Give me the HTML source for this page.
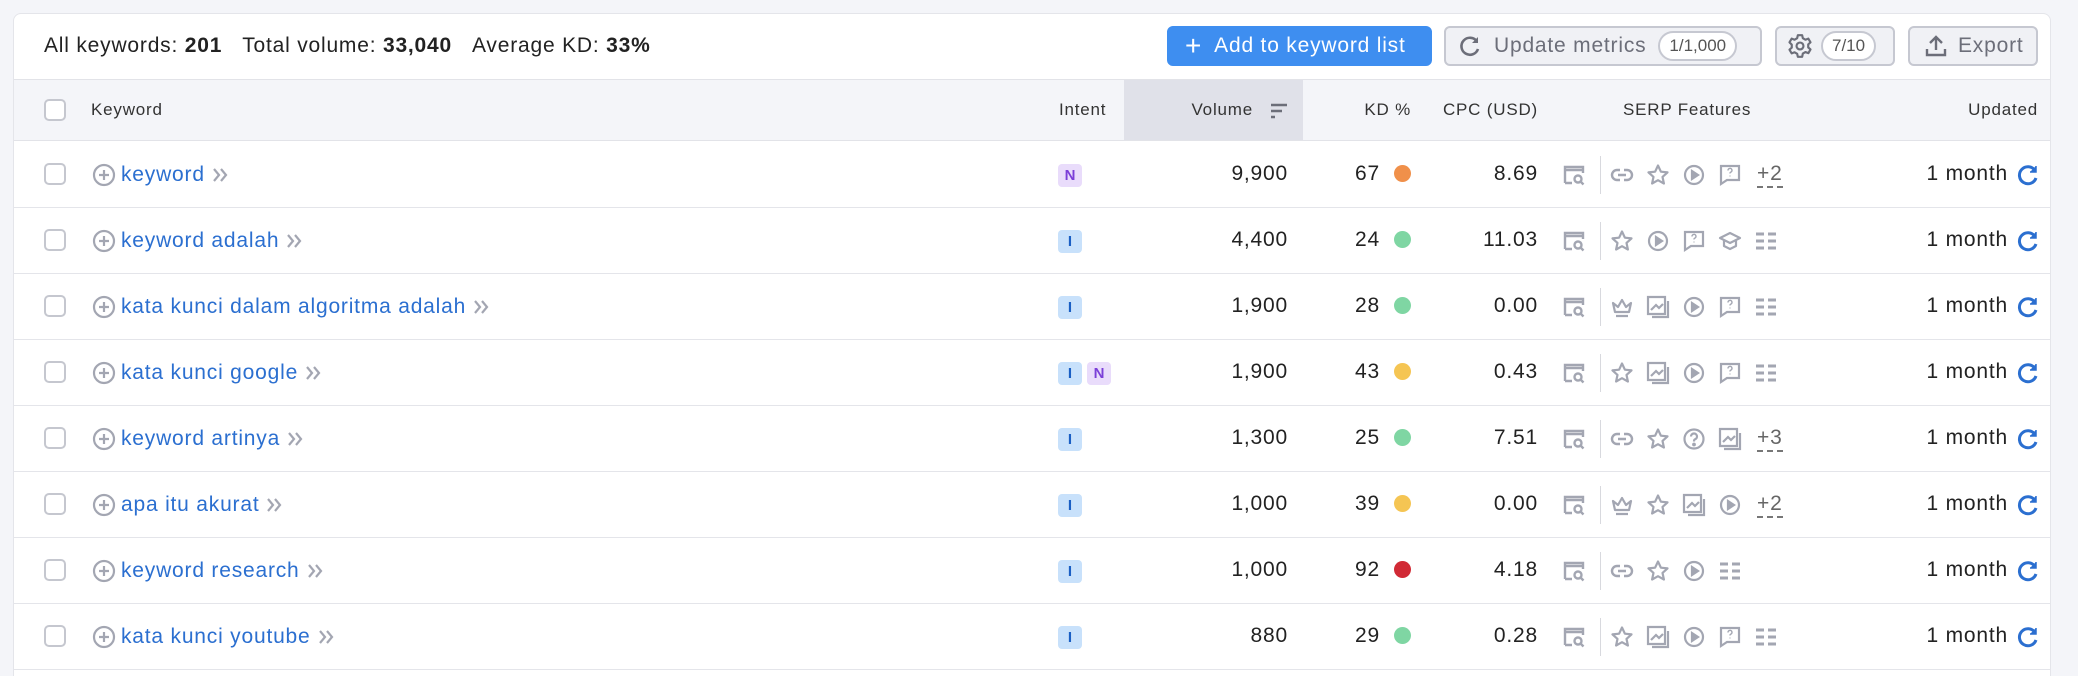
<!DOCTYPE html>
<html style="height:676px;overflow:hidden"><head><meta charset="utf-8"><style>
*{box-sizing:border-box;margin:0;padding:0}
body{width:2078px;height:676px;background:#f4f5f9;font-family:"Liberation Sans",sans-serif;color:#333;overflow:hidden;position:relative;letter-spacing:0.05em}
.card{position:absolute;left:13px;top:13px;width:2038px;height:690px;background:#fff;border:1px solid #e4e5ea;border-radius:8px;overflow:hidden}
.abs{position:absolute}
.top{position:absolute;left:30px;top:18px;font-size:21px;line-height:28px;color:#222;white-space:nowrap}
.top b{font-weight:bold;margin-right:20px}
.btn{position:absolute;top:12px;height:40px;border-radius:6px;border:2px solid #c6c8d1;background:#f0f1f5;color:#6c6e79;font-size:21px;display:flex;align-items:center;white-space:nowrap}
.pill{border:2px solid #c6c8d1;background:#fff;border-radius:16px;font-size:17px;height:30px;padding:0 9px;display:flex;align-items:center;color:#555;letter-spacing:0}
.thead{position:absolute;left:0;top:65px;width:100%;height:62px;background:#f4f5f9;border-top:1px solid #e2e3e8;border-bottom:1px solid #e2e3e8;font-size:17px;color:#333}
.thead span{position:absolute;top:20px;white-space:nowrap}
.cb{position:absolute;width:22px;height:22px;border:2px solid #c5c7cf;border-radius:5px;background:#fff}
.row{position:absolute;left:0;width:100%;height:66px;border-bottom:1px solid #e4e5ea;font-size:21px;color:#222}
.row>*{position:absolute}
.kw{left:107px;top:21px;color:#2b6fd0;white-space:nowrap;display:flex;align-items:center}
.kw svg{margin-left:6px}
.badge{top:22px;width:24px;height:23px;border-radius:4px;font-size:15px;font-weight:bold;text-align:center;line-height:23px;letter-spacing:0}
.bI{background:#c8e1fb;color:#1a5fc4}
.bN{background:#e9dcfb;color:#7b3fd8}
.vol{right:762px;top:20px}
.kd{right:670px;top:20px}
.dot{left:1380px;top:23px;width:17px;height:17px;border-radius:50%}
.cpc{right:512px;top:20px}
.ic{top:21px;width:24px;height:24px}
.div{left:1586px;top:14px;width:1px;height:38px;background:#d8d9de}
.more{top:20px;font-size:21px;color:#666;border-bottom:2px dashed #777;line-height:24px}
.upd{right:42px;top:20px}
.rf{left:2002px;top:21px;width:24px;height:24px}
</style></head><body>
<svg width="0" height="0" style="position:absolute">
<defs>
<g id="serp" fill="none" stroke="#a3a6b2" stroke-width="2.4"><path d="M3 20V4h18v6M3 7h18M3 20h7"/><circle cx="16" cy="16" r="3.5"/><path d="M18.5 18.5l3 3"/></g>
<g id="link" fill="none" stroke="#a3a6b2" stroke-width="2.4"><path d="M10 7H7a5 5 0 0 0 0 10h3M14 7h3a5 5 0 0 1 0 10h-3M8 12h8"/></g>
<g id="star" fill="none" stroke="#a3a6b2" stroke-width="2.2" stroke-linejoin="round"><path d="M12 2.5l2.9 6.2 6.6.7-5 4.5 1.4 6.6L12 17.2l-5.9 3.3 1.4-6.6-5-4.5 6.6-.7z"/></g>
<g id="play" fill="none" stroke="#a3a6b2" stroke-width="2.2"><circle cx="12" cy="12" r="9"/><path d="M10 8v8l6-4z" fill="#a3a6b2"/></g>
<g id="faq" fill="none" stroke="#a3a6b2" stroke-width="2.2"><path d="M3 3h18v14H9l-6 4z"/><path d="M10 7.5a2 2 0 1 1 2.5 1.8c-.5.2-.5.6-.5 1.2" stroke-width="1.4"/><circle cx="12" cy="13" r=".6" fill="#a3a6b2" stroke="none"/></g>
<g id="crown" fill="none" stroke="#a3a6b2" stroke-width="2.2" stroke-linejoin="round"><path d="M3 8l5 4 4-7 4 7 5-4-2 9H5zM6 21h12"/></g>
<g id="image" fill="none" stroke="#a3a6b2" stroke-width="2.2"><path d="M2 2h17v17H2zM5 15l5-5 3 3 4-4M22 6v16H6"/></g>
<g id="cap" fill="none" stroke="#a3a6b2" stroke-width="2.2" stroke-linejoin="round"><path d="M2 9l10-5 10 5-10 5zM6 11v6l6 3 6-3v-6"/></g>
<g id="list" stroke="#a3a6b2" stroke-width="3"><path d="M2 5h8M2 12h8M2 19h8M14 5h8M14 12h8M14 19h8"/></g>
<g id="qst" fill="none" stroke="#a3a6b2" stroke-width="2.2"><circle cx="12" cy="12" r="9.5"/><path d="M9 9.5a3 3 0 1 1 4 2.8c-1 .4-1 1-1 2.2"/><circle cx="12" cy="17.5" r=".8" fill="#a3a6b2"/></g>
<g id="plus" fill="none" stroke="#a3a6b2" stroke-width="2.2"><circle cx="12" cy="12" r="10"/><path d="M12 7v10M7 12h10"/></g>
<g id="ref" fill="none" stroke="#2b6fd0" stroke-width="3"><path d="M19 7.5A8.5 8.5 0 1 0 20 15"/><path d="M20 3v6h-6" fill="#2b6fd0" stroke-width="1.5"/></g>
<g id="chev" fill="none" stroke="#a3a6b2" stroke-width="2.2"><path d="M3 4l5 6-5 6M10 4l5 6-5 6"/></g>
</defs></svg>

<div class="card">
<div class="top">All keywords: <b>201</b>Total volume: <b>33,040</b>Average KD: <b>33%</b></div>

<div class="btn" style="left:1153px;width:265px;background:#3e8ef0;border-color:#3e8ef0;color:#fff;padding-left:16px"><span style="font-size:28px;margin-right:12px;font-weight:300">+</span>Add to keyword list</div>
<div class="btn" style="left:1430px;width:318px;padding-left:12px"><svg width="24" height="24" viewBox="0 0 24 24" style="margin-right:12px"><path d="M19 7.5A8.5 8.5 0 1 0 20 15" fill="none" stroke="#6c6e79" stroke-width="2.6"/><path d="M20 3v6h-6z" fill="#6c6e79"/></svg>Update metrics<div class="pill" style="margin-left:12px">1/1,000</div></div>
<div class="btn" style="left:1761px;width:120px;padding-left:10px"><svg width="26" height="26" viewBox="0 0 24 24" style="margin-right:8px"><circle cx="12" cy="12" r="3.2" fill="none" stroke="#6c6e79" stroke-width="2"/><path d="M10 2h4l.6 2.8 2.4 1.4 2.7-1 2 3.4-2.1 1.9v2.8l2.1 1.9-2 3.4-2.7-1-2.4 1.4L14 22h-4l-.6-2.8-2.4-1.4-2.7 1-2-3.4 2.1-1.9v-2.8L2.3 8.6l2-3.4 2.7 1 2.4-1.4z" fill="none" stroke="#6c6e79" stroke-width="2" stroke-linejoin="round"/></svg><div class="pill">7/10</div></div>
<div class="btn" style="left:1894px;width:130px;padding-left:14px"><svg width="24" height="24" viewBox="0 0 24 24" style="margin-right:10px"><path d="M12 16V3M6 9l6-6 6 6M3 15v6h18v-6" fill="none" stroke="#6c6e79" stroke-width="2.4"/></svg>Export</div>

<div class="thead">
<div class="cb" style="left:30px;top:19px"></div>
<span style="left:77px">Keyword</span>
<span style="left:1045px">Intent</span>
<div class="abs" style="left:1110px;top:0;width:179px;height:60px;background:#e0e1e9"></div>
<span style="right:797px">Volume</span>
<svg class="abs" style="left:1256px;top:22px" width="18" height="18" viewBox="0 0 18 18"><path d="M1 3h16M1 9h11M1 15h4" stroke="#6c6e79" stroke-width="2.5"/></svg>
<span style="right:639px">KD %</span>
<span style="right:512px">CPC (USD)</span>
<span style="left:1609px">SERP Features</span>
<span style="right:12px">Updated</span>
</div>

<div class="row" style="top:128px">
<div class="cb" style="left:30px;top:21px"></div><svg class="ic" style="left:78px" viewBox="0 0 24 24"><use href="#plus"/></svg>
<div class="kw">keyword<svg width="18" height="20" viewBox="0 0 18 20"><use href="#chev"/></svg></div>
<div class="badge bN" style="left:1044px">N</div>
<div class="vol">9,900</div><div class="kd">67</div><div class="dot" style="background:#f0904a"></div><div class="cpc">8.69</div>
<svg class="ic" style="left:1548px" viewBox="0 0 24 24"><use href="#serp"/></svg><div class="div"></div>
<svg class="ic" style="left:1596px" viewBox="0 0 24 24"><use href="#link"/></svg>
<svg class="ic" style="left:1632px" viewBox="0 0 24 24"><use href="#star"/></svg>
<svg class="ic" style="left:1668px" viewBox="0 0 24 24"><use href="#play"/></svg>
<svg class="ic" style="left:1704px" viewBox="0 0 24 24"><use href="#faq"/></svg>
<div class="more" style="left:1743px">+2</div>
<div class="upd">1 month</div><svg class="rf" viewBox="0 0 24 24"><use href="#ref"/></svg>
</div>

<div class="row" style="top:194px">
<div class="cb" style="left:30px;top:21px"></div><svg class="ic" style="left:78px" viewBox="0 0 24 24"><use href="#plus"/></svg>
<div class="kw">keyword adalah<svg width="18" height="20" viewBox="0 0 18 20"><use href="#chev"/></svg></div>
<div class="badge bI" style="left:1044px">I</div>
<div class="vol">4,400</div><div class="kd">24</div><div class="dot" style="background:#7fd6a3"></div><div class="cpc">11.03</div>
<svg class="ic" style="left:1548px" viewBox="0 0 24 24"><use href="#serp"/></svg><div class="div"></div>
<svg class="ic" style="left:1596px" viewBox="0 0 24 24"><use href="#star"/></svg>
<svg class="ic" style="left:1632px" viewBox="0 0 24 24"><use href="#play"/></svg>
<svg class="ic" style="left:1668px" viewBox="0 0 24 24"><use href="#faq"/></svg>
<svg class="ic" style="left:1704px" viewBox="0 0 24 24"><use href="#cap"/></svg>
<svg class="ic" style="left:1740px" viewBox="0 0 24 24"><use href="#list"/></svg>
<div class="upd">1 month</div><svg class="rf" viewBox="0 0 24 24"><use href="#ref"/></svg>
</div>

<div class="row" style="top:260px">
<div class="cb" style="left:30px;top:21px"></div><svg class="ic" style="left:78px" viewBox="0 0 24 24"><use href="#plus"/></svg>
<div class="kw">kata kunci dalam algoritma adalah<svg width="18" height="20" viewBox="0 0 18 20"><use href="#chev"/></svg></div>
<div class="badge bI" style="left:1044px">I</div>
<div class="vol">1,900</div><div class="kd">28</div><div class="dot" style="background:#7fd6a3"></div><div class="cpc">0.00</div>
<svg class="ic" style="left:1548px" viewBox="0 0 24 24"><use href="#serp"/></svg><div class="div"></div>
<svg class="ic" style="left:1596px" viewBox="0 0 24 24"><use href="#crown"/></svg>
<svg class="ic" style="left:1632px" viewBox="0 0 24 24"><use href="#image"/></svg>
<svg class="ic" style="left:1668px" viewBox="0 0 24 24"><use href="#play"/></svg>
<svg class="ic" style="left:1704px" viewBox="0 0 24 24"><use href="#faq"/></svg>
<svg class="ic" style="left:1740px" viewBox="0 0 24 24"><use href="#list"/></svg>
<div class="upd">1 month</div><svg class="rf" viewBox="0 0 24 24"><use href="#ref"/></svg>
</div>

<div class="row" style="top:326px">
<div class="cb" style="left:30px;top:21px"></div><svg class="ic" style="left:78px" viewBox="0 0 24 24"><use href="#plus"/></svg>
<div class="kw">kata kunci google<svg width="18" height="20" viewBox="0 0 18 20"><use href="#chev"/></svg></div>
<div class="badge bI" style="left:1044px">I</div><div class="badge bN" style="left:1073px">N</div>
<div class="vol">1,900</div><div class="kd">43</div><div class="dot" style="background:#f5c553"></div><div class="cpc">0.43</div>
<svg class="ic" style="left:1548px" viewBox="0 0 24 24"><use href="#serp"/></svg><div class="div"></div>
<svg class="ic" style="left:1596px" viewBox="0 0 24 24"><use href="#star"/></svg>
<svg class="ic" style="left:1632px" viewBox="0 0 24 24"><use href="#image"/></svg>
<svg class="ic" style="left:1668px" viewBox="0 0 24 24"><use href="#play"/></svg>
<svg class="ic" style="left:1704px" viewBox="0 0 24 24"><use href="#faq"/></svg>
<svg class="ic" style="left:1740px" viewBox="0 0 24 24"><use href="#list"/></svg>
<div class="upd">1 month</div><svg class="rf" viewBox="0 0 24 24"><use href="#ref"/></svg>
</div>

<div class="row" style="top:392px">
<div class="cb" style="left:30px;top:21px"></div><svg class="ic" style="left:78px" viewBox="0 0 24 24"><use href="#plus"/></svg>
<div class="kw">keyword artinya<svg width="18" height="20" viewBox="0 0 18 20"><use href="#chev"/></svg></div>
<div class="badge bI" style="left:1044px">I</div>
<div class="vol">1,300</div><div class="kd">25</div><div class="dot" style="background:#7fd6a3"></div><div class="cpc">7.51</div>
<svg class="ic" style="left:1548px" viewBox="0 0 24 24"><use href="#serp"/></svg><div class="div"></div>
<svg class="ic" style="left:1596px" viewBox="0 0 24 24"><use href="#link"/></svg>
<svg class="ic" style="left:1632px" viewBox="0 0 24 24"><use href="#star"/></svg>
<svg class="ic" style="left:1668px" viewBox="0 0 24 24"><use href="#qst"/></svg>
<svg class="ic" style="left:1704px" viewBox="0 0 24 24"><use href="#image"/></svg>
<div class="more" style="left:1743px">+3</div>
<div class="upd">1 month</div><svg class="rf" viewBox="0 0 24 24"><use href="#ref"/></svg>
</div>

<div class="row" style="top:458px">
<div class="cb" style="left:30px;top:21px"></div><svg class="ic" style="left:78px" viewBox="0 0 24 24"><use href="#plus"/></svg>
<div class="kw">apa itu akurat<svg width="18" height="20" viewBox="0 0 18 20"><use href="#chev"/></svg></div>
<div class="badge bI" style="left:1044px">I</div>
<div class="vol">1,000</div><div class="kd">39</div><div class="dot" style="background:#f5c553"></div><div class="cpc">0.00</div>
<svg class="ic" style="left:1548px" viewBox="0 0 24 24"><use href="#serp"/></svg><div class="div"></div>
<svg class="ic" style="left:1596px" viewBox="0 0 24 24"><use href="#crown"/></svg>
<svg class="ic" style="left:1632px" viewBox="0 0 24 24"><use href="#star"/></svg>
<svg class="ic" style="left:1668px" viewBox="0 0 24 24"><use href="#image"/></svg>
<svg class="ic" style="left:1704px" viewBox="0 0 24 24"><use href="#play"/></svg>
<div class="more" style="left:1743px">+2</div>
<div class="upd">1 month</div><svg class="rf" viewBox="0 0 24 24"><use href="#ref"/></svg>
</div>

<div class="row" style="top:524px">
<div class="cb" style="left:30px;top:21px"></div><svg class="ic" style="left:78px" viewBox="0 0 24 24"><use href="#plus"/></svg>
<div class="kw">keyword research<svg width="18" height="20" viewBox="0 0 18 20"><use href="#chev"/></svg></div>
<div class="badge bI" style="left:1044px">I</div>
<div class="vol">1,000</div><div class="kd">92</div><div class="dot" style="background:#d12a35"></div><div class="cpc">4.18</div>
<svg class="ic" style="left:1548px" viewBox="0 0 24 24"><use href="#serp"/></svg><div class="div"></div>
<svg class="ic" style="left:1596px" viewBox="0 0 24 24"><use href="#link"/></svg>
<svg class="ic" style="left:1632px" viewBox="0 0 24 24"><use href="#star"/></svg>
<svg class="ic" style="left:1668px" viewBox="0 0 24 24"><use href="#play"/></svg>
<svg class="ic" style="left:1704px" viewBox="0 0 24 24"><use href="#list"/></svg>
<div class="upd">1 month</div><svg class="rf" viewBox="0 0 24 24"><use href="#ref"/></svg>
</div>

<div class="row" style="top:590px">
<div class="cb" style="left:30px;top:21px"></div><svg class="ic" style="left:78px" viewBox="0 0 24 24"><use href="#plus"/></svg>
<div class="kw">kata kunci youtube<svg width="18" height="20" viewBox="0 0 18 20"><use href="#chev"/></svg></div>
<div class="badge bI" style="left:1044px">I</div>
<div class="vol">880</div><div class="kd">29</div><div class="dot" style="background:#7fd6a3"></div><div class="cpc">0.28</div>
<svg class="ic" style="left:1548px" viewBox="0 0 24 24"><use href="#serp"/></svg><div class="div"></div>
<svg class="ic" style="left:1596px" viewBox="0 0 24 24"><use href="#star"/></svg>
<svg class="ic" style="left:1632px" viewBox="0 0 24 24"><use href="#image"/></svg>
<svg class="ic" style="left:1668px" viewBox="0 0 24 24"><use href="#play"/></svg>
<svg class="ic" style="left:1704px" viewBox="0 0 24 24"><use href="#faq"/></svg>
<svg class="ic" style="left:1740px" viewBox="0 0 24 24"><use href="#list"/></svg>
<div class="upd">1 month</div><svg class="rf" viewBox="0 0 24 24"><use href="#ref"/></svg>
</div>
</div>
</body></html>
